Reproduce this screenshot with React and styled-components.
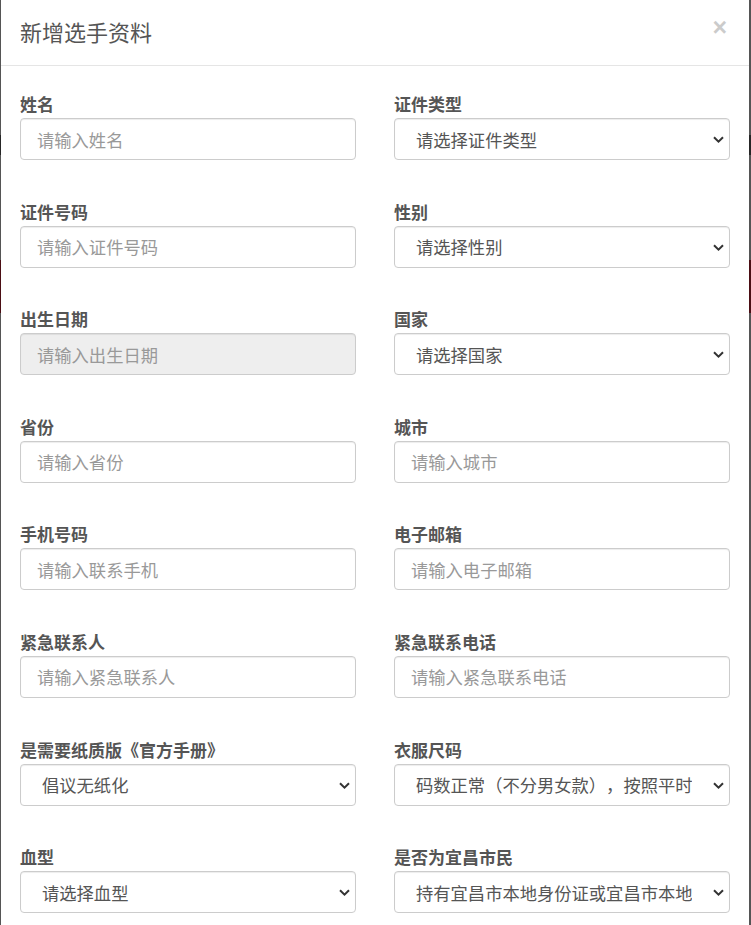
import React from "react";
import styled, { createGlobalStyle } from "styled-components";

const Global = createGlobalStyle`
  html, body {
    margin: 0;
    padding: 0;
  }
  body {
    font-family: "Noto Sans CJK SC", "Noto Sans", sans-serif;
    background: linear-gradient(
      to bottom,
      #555 0px, #555 135px,
      #262626 135px, #262626 155px,
      #555 155px, #555 260px,
      #4b0e14 260px, #4b0e14 313px,
      #555 313px, #555 100%
    );
    min-height: 925px;
    overflow: hidden;
    text-spacing-trim: space-all;
  }
`;

const Modal = styled.div`
  margin-left: 1px;
  width: 748px;
  min-height: 925px;
  background: #fff;
  box-sizing: border-box;
`;

const Header = styled.div`
  display: flex;
  align-items: flex-start;
  justify-content: space-between;
  padding: 16px 22px 18px 19px;
  border-bottom: 1px solid #e5e5e5;
`;

const Title = styled.h4`
  margin: 0;
  font-size: 22px;
  line-height: 31px;
  font-weight: 400;
  color: #555;
`;

const Close = styled.button`
  border: 0;
  background: transparent;
  padding: 0;
  margin-top: -1px;
  font-family: "Liberation Sans", Arial, sans-serif;
  font-size: 25px;
  font-weight: 700;
  line-height: 1;
  color: #000;
  opacity: 0.2;
  cursor: pointer;
`;

const Body = styled.div`
  display: grid;
  grid-template-columns: 336px 336px;
  column-gap: 38px;
  row-gap: 41.6px;
  padding: 28px 19px 40px 19px;
`;

const Field = styled.div`
  display: flex;
  flex-direction: column;
`;

const Label = styled.label`
  font-size: 17px;
  line-height: 20px;
  font-weight: 700;
  color: #555;
  margin-bottom: 4px;
`;

const controlBase = `
  box-sizing: border-box;
  width: 100%;
  height: 42px;
  border: 1px solid #ccc;
  border-radius: 4px;
  font-family: "Noto Sans CJK SC", "Noto Sans", sans-serif;
  font-size: 17.3px;
  color: #555;
  outline: none;
  text-spacing-trim: space-all;
  box-shadow: inset 0 1px 1px rgba(0,0,0,.075);
`;

const Input = styled.input`
  ${controlBase}
  padding: 0 16px;
  background: ${(p) => (p.disabled ? "#eee" : "#fff")};
  &::placeholder {
    color: #999;
  }
`;

const SelectWrap = styled.div`
  position: relative;
`;

const Select = styled.select`
  ${controlBase}
  appearance: none;
  -webkit-appearance: none;
  background: #fff;
  padding: 0 37px 0 21px;
  white-space: nowrap;
  overflow: hidden;
`;

const Chevron = styled.svg`
  position: absolute;
  right: 6px;
  top: 50%;
  width: 11px;
  height: 7px;
  margin-top: -3px;
  pointer-events: none;
`;

function SelectBox({ value }) {
  return (
    <SelectWrap>
      <Select defaultValue={value}>
        <option value={value}>{value}</option>
      </Select>
      <Chevron viewBox="0 0 11 7">
        <path d="M1 1.2 L5.5 5.6 L10 1.2" fill="none" stroke="#333" strokeWidth="2" />
      </Chevron>
    </SelectWrap>
  );
}

const fields = [
  { label: "姓名", type: "input", ph: "请输入姓名" },
  { label: "证件类型", type: "select", value: "请选择证件类型" },
  { label: "证件号码", type: "input", ph: "请输入证件号码" },
  { label: "性别", type: "select", value: "请选择性别" },
  { label: "出生日期", type: "input", ph: "请输入出生日期", disabled: true },
  { label: "国家", type: "select", value: "请选择国家" },
  { label: "省份", type: "input", ph: "请输入省份" },
  { label: "城市", type: "input", ph: "请输入城市" },
  { label: "手机号码", type: "input", ph: "请输入联系手机" },
  { label: "电子邮箱", type: "input", ph: "请输入电子邮箱" },
  { label: "紧急联系人", type: "input", ph: "请输入紧急联系人" },
  { label: "紧急联系电话", type: "input", ph: "请输入紧急联系电话" },
  { label: "是需要纸质版《官方手册》", type: "select", value: "倡议无纸化" },
  { label: "衣服尺码", type: "select", value: "码数正常（不分男女款），按照平时尺码选择即可" },
  { label: "血型", type: "select", value: "请选择血型" },
  { label: "是否为宜昌市民", type: "select", value: "持有宜昌市本地身份证或宜昌市本地户口" },
];

export default function App() {
  return (
    <>
      <Global />
      <Modal>
        <Header>
          <Title>新增选手资料</Title>
          <Close type="button">×</Close>
        </Header>
        <Body>
          {fields.map((f) => (
            <Field key={f.label}>
              <Label>{f.label}</Label>
              {f.type === "input" ? (
                <Input placeholder={f.ph} disabled={f.disabled} />
              ) : (
                <SelectBox value={f.value} />
              )}
            </Field>
          ))}
        </Body>
      </Modal>
    </>
  );
}
